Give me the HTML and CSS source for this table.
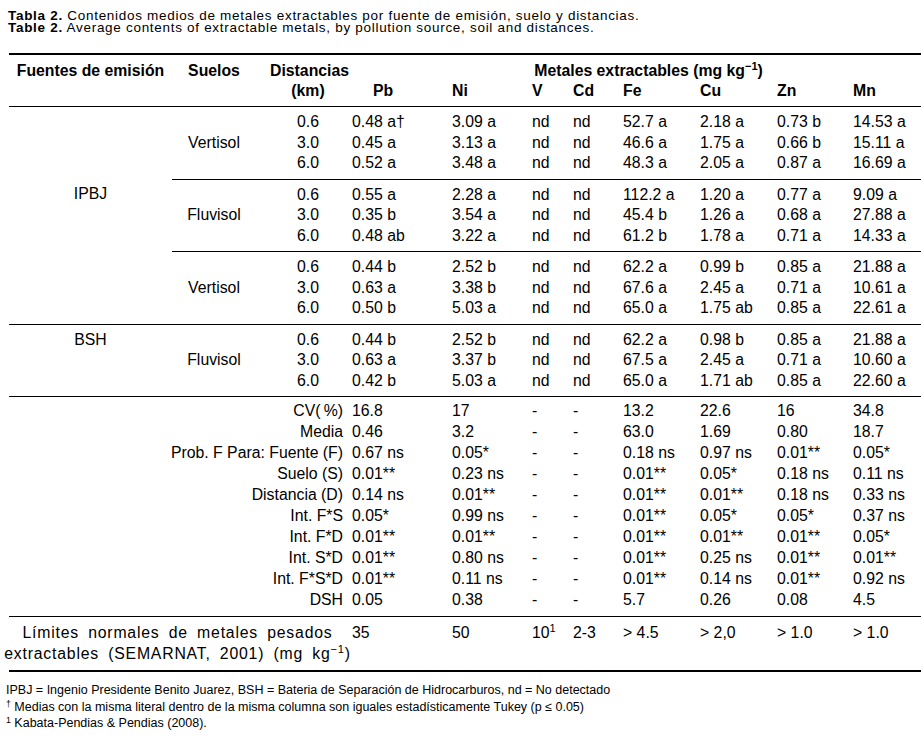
FILE: index.html
```html
<!DOCTYPE html>
<html lang="es">
<head>
<meta charset="utf-8">
<title>Tabla 2</title>
<link rel="stylesheet" href="styles.css">
</head>
<body>
<div class="caption">
  <p><b>Tabla 2.</b> Contenidos medios de metales extractables por fuente de emisión, suelo y distancias.</p>
  <p><b>Table 2.</b> Average contents of extractable metals, by pollution source, soil and distances.</p>
</div>
<table class="tbl">
  <colgroup>
    <col class="w-src"><col class="w-soil"><col class="w-dist"><col class="w-pb"><col class="w-ni"><col class="w-v"><col class="w-cd"><col class="w-fe"><col class="w-cu"><col class="w-zn"><col class="w-mn">
  </colgroup>
  <thead>
    <tr class="h1">
      <th class="src">Fuentes de emisión</th>
      <th class="soil">Suelos</th>
      <th class="dist">Distancias</th>
      <th class="metals" colspan="8">Metales extractables (mg kg<sup>−1</sup>)</th>
    </tr>
    <tr class="h2">
      <th></th><th></th>
      <th class="dist">(km)</th>
      <th class="m h-pb">Pb</th><th class="m">Ni</th><th class="m">V</th><th class="m">Cd</th><th class="m">Fe</th><th class="m">Cu</th><th class="m">Zn</th><th class="m">Mn</th>
    </tr>
  </thead>
  <tbody class="grp">
    <tr class="first"><td></td><td></td><td class="dist">0.6</td><td class="m">0.48 a†</td><td class="m">3.09 a</td><td class="m">nd</td><td class="m">nd</td><td class="m">52.7 a</td><td class="m">2.18 a</td><td class="m">0.73 b</td><td class="m">14.53 a</td></tr>
    <tr><td></td><td class="soil">Vertisol</td><td class="dist">3.0</td><td class="m">0.45 a</td><td class="m">3.13 a</td><td class="m">nd</td><td class="m">nd</td><td class="m">46.6 a</td><td class="m">1.75 a</td><td class="m">0.66 b</td><td class="m">15.11 a</td></tr>
    <tr class="last"><td></td><td></td><td class="dist">6.0</td><td class="m">0.52 a</td><td class="m">3.48 a</td><td class="m">nd</td><td class="m">nd</td><td class="m">48.3 a</td><td class="m">2.05 a</td><td class="m">0.87 a</td><td class="m">16.69 a</td></tr>
  </tbody>
  <tbody class="grp part">
    <tr class="first"><td class="src">IPBJ</td><td></td><td class="dist">0.6</td><td class="m">0.55 a</td><td class="m">2.28 a</td><td class="m">nd</td><td class="m">nd</td><td class="m">112.2 a</td><td class="m">1.20 a</td><td class="m">0.77 a</td><td class="m">9.09 a</td></tr>
    <tr><td></td><td class="soil">Fluvisol</td><td class="dist">3.0</td><td class="m">0.35 b</td><td class="m">3.54 a</td><td class="m">nd</td><td class="m">nd</td><td class="m">45.4 b</td><td class="m">1.26 a</td><td class="m">0.68 a</td><td class="m">27.88 a</td></tr>
    <tr class="last"><td></td><td></td><td class="dist">6.0</td><td class="m">0.48 ab</td><td class="m">3.22 a</td><td class="m">nd</td><td class="m">nd</td><td class="m">61.2 b</td><td class="m">1.78 a</td><td class="m">0.71 a</td><td class="m">14.33 a</td></tr>
  </tbody>
  <tbody class="grp part">
    <tr class="first"><td></td><td></td><td class="dist">0.6</td><td class="m">0.44 b</td><td class="m">2.52 b</td><td class="m">nd</td><td class="m">nd</td><td class="m">62.2 a</td><td class="m">0.99 b</td><td class="m">0.85 a</td><td class="m">21.88 a</td></tr>
    <tr><td></td><td class="soil">Vertisol</td><td class="dist">3.0</td><td class="m">0.63 a</td><td class="m">3.38 b</td><td class="m">nd</td><td class="m">nd</td><td class="m">67.6 a</td><td class="m">2.45 a</td><td class="m">0.71 a</td><td class="m">10.61 a</td></tr>
    <tr class="last"><td></td><td></td><td class="dist">6.0</td><td class="m">0.50 b</td><td class="m">5.03 a</td><td class="m">nd</td><td class="m">nd</td><td class="m">65.0 a</td><td class="m">1.75 ab</td><td class="m">0.85 a</td><td class="m">22.61 a</td></tr>
  </tbody>
  <tbody class="grp full">
    <tr class="first"><td class="src">BSH</td><td></td><td class="dist">0.6</td><td class="m">0.44 b</td><td class="m">2.52 b</td><td class="m">nd</td><td class="m">nd</td><td class="m">62.2 a</td><td class="m">0.98 b</td><td class="m">0.85 a</td><td class="m">21.88 a</td></tr>
    <tr><td></td><td class="soil">Fluvisol</td><td class="dist">3.0</td><td class="m">0.63 a</td><td class="m">3.37 b</td><td class="m">nd</td><td class="m">nd</td><td class="m">67.5 a</td><td class="m">2.45 a</td><td class="m">0.71 a</td><td class="m">10.60 a</td></tr>
    <tr class="last"><td></td><td></td><td class="dist">6.0</td><td class="m">0.42 b</td><td class="m">5.03 a</td><td class="m">nd</td><td class="m">nd</td><td class="m">65.0 a</td><td class="m">1.71 ab</td><td class="m">0.85 a</td><td class="m">22.60 a</td></tr>
  </tbody>
  <tbody class="stats full">
    <tr class="first"><td class="lbl" colspan="3">CV(&#8201;%)</td><td class="m">16.8</td><td class="m">17</td><td class="m">-</td><td class="m">-</td><td class="m">13.2</td><td class="m">22.6</td><td class="m">16</td><td class="m">34.8</td></tr>
    <tr><td class="lbl" colspan="3">Media</td><td class="m">0.46</td><td class="m">3.2</td><td class="m">-</td><td class="m">-</td><td class="m">63.0</td><td class="m">1.69</td><td class="m">0.80</td><td class="m">18.7</td></tr>
    <tr><td class="lbl" colspan="3">Prob. F Para: Fuente (F)</td><td class="m">0.67 ns</td><td class="m">0.05*</td><td class="m">-</td><td class="m">-</td><td class="m">0.18 ns</td><td class="m">0.97 ns</td><td class="m">0.01**</td><td class="m">0.05*</td></tr>
    <tr><td class="lbl" colspan="3">Suelo (S)</td><td class="m">0.01**</td><td class="m">0.23 ns</td><td class="m">-</td><td class="m">-</td><td class="m">0.01**</td><td class="m">0.05*</td><td class="m">0.18 ns</td><td class="m">0.11 ns</td></tr>
    <tr><td class="lbl" colspan="3">Distancia (D)</td><td class="m">0.14 ns</td><td class="m">0.01**</td><td class="m">-</td><td class="m">-</td><td class="m">0.01**</td><td class="m">0.01**</td><td class="m">0.18 ns</td><td class="m">0.33 ns</td></tr>
    <tr><td class="lbl" colspan="3">Int. F*S</td><td class="m">0.05*</td><td class="m">0.99 ns</td><td class="m">-</td><td class="m">-</td><td class="m">0.01**</td><td class="m">0.05*</td><td class="m">0.05*</td><td class="m">0.37 ns</td></tr>
    <tr><td class="lbl" colspan="3">Int. F*D</td><td class="m">0.01**</td><td class="m">0.01**</td><td class="m">-</td><td class="m">-</td><td class="m">0.01**</td><td class="m">0.01**</td><td class="m">0.01**</td><td class="m">0.05*</td></tr>
    <tr><td class="lbl" colspan="3">Int. S*D</td><td class="m">0.01**</td><td class="m">0.80 ns</td><td class="m">-</td><td class="m">-</td><td class="m">0.01**</td><td class="m">0.25 ns</td><td class="m">0.01**</td><td class="m">0.01**</td></tr>
    <tr><td class="lbl" colspan="3">Int. F*S*D</td><td class="m">0.01**</td><td class="m">0.11 ns</td><td class="m">-</td><td class="m">-</td><td class="m">0.01**</td><td class="m">0.14 ns</td><td class="m">0.01**</td><td class="m">0.92 ns</td></tr>
    <tr class="last"><td class="lbl" colspan="3">DSH</td><td class="m">0.05</td><td class="m">0.38</td><td class="m">-</td><td class="m">-</td><td class="m">5.7</td><td class="m">0.26</td><td class="m">0.08</td><td class="m">4.5</td></tr>
  </tbody>
  <tbody class="limits full">
    <tr class="first"><td class="limlbl" colspan="3"><div class="limtext">Límites normales de metales pesados<br>extractables (SEMARNAT, 2001) (mg kg<sup>−1</sup>)</div></td><td class="m">35</td><td class="m">50</td><td class="m">10<sup>1</sup></td><td class="m">2-3</td><td class="m">&gt; 4.5</td><td class="m">&gt; 2,0</td><td class="m">&gt; 1.0</td><td class="m">&gt; 1.0</td></tr>
  </tbody>
</table>
<div class="notes">
  <p>IPBJ = Ingenio Presidente Benito Juarez, BSH = Bateria de Separación de Hidrocarburos, nd = No detectado</p>
  <p><sup>†</sup> Medias con la misma literal dentro de la misma columna son iguales estadísticamente Tukey (p ≤ 0.05)</p>
  <p><sup>1</sup> Kabata-Pendias &amp; Pendias (2008).</p>
</div>
</body>
</html>
```

FILE: styles.css
```css
html, body {
  margin: 0;
  padding: 0;
  background: #ffffff;
}

body {
  font-family: "Liberation Sans", Arial, sans-serif;
  color: #000000;
  width: 921px;
}

sup {
  font-size: 0.7em;
  line-height: 0;
  vertical-align: 0.5em;
}

.caption {
  padding: 9.5px 0 0 8px;
  font-size: 13.5px;
  line-height: 12.5px;
  letter-spacing: 0.7px;
}

.caption p {
  margin: 0;
}

.tbl {
  margin: 18.5px 0 0 9px;
  width: 912px;
  border-collapse: collapse;
  table-layout: fixed;
  font-size: 15.8px;
  line-height: 20.5px;
}

.w-src { width: 163px; }
.w-soil { width: 84px; }
.w-dist { width: 90px; }
.w-pb { width: 100px; }
.w-ni { width: 80px; }
.w-v { width: 41px; }
.w-cd { width: 50px; }
.w-fe { width: 77px; }
.w-cu { width: 77px; }
.w-zn { width: 76px; }
.w-mn { width: 74px; }

.tbl th,
.tbl td {
  padding: 0;
  white-space: nowrap;
  text-align: left;
  vertical-align: top;
}

.tbl td {
  font-weight: normal;
}

.tbl th {
  font-weight: bold;
  line-height: 20px;
}

.h1 th {
  border-top: 2px solid #000;
  padding-top: 5.5px;
}

.h2 th {
  border-bottom: 1px solid #000;
  padding-bottom: 5.5px;
}

.tbl .src,
.tbl .soil {
  text-align: center;
}

.tbl .dist {
  text-align: center;
  padding-left: 14px;
}

.tbl .m {
  padding-left: 6px;
}

.tbl .h-pb {
  padding-left: 27px;
}

.tbl .metals {
  text-align: center;
  padding-left: 30px;
}

.tbl .lbl {
  text-align: right;
  padding-right: 3px;
}

.grp tr.first td {
  padding-top: 5px;
}

.grp tr.last td {
  padding-bottom: 5px;
}

.part tr.first td + td {
  border-top: 1px solid #000;
}

.full tr.first td {
  border-top: 1px solid #000;
}

.stats td {
  line-height: 21px;
}

.stats tr.first td {
  padding-top: 3px;
}

.stats tr.last td {
  padding-bottom: 6px;
}

.limits td {
  padding-top: 6px;
  padding-bottom: 6px;
  border-bottom: 2px solid #000;
}

.tbl .limlbl {
  text-align: center;
}

.limtext {
  margin: 0 -14px;
  text-align: center;
  letter-spacing: 0.8px;
  word-spacing: 4px;
}

.notes {
  margin: 10px 0 0 6px;
  font-size: 12.5px;
  line-height: 16.5px;
}

.notes p {
  margin: 0;
}
```
